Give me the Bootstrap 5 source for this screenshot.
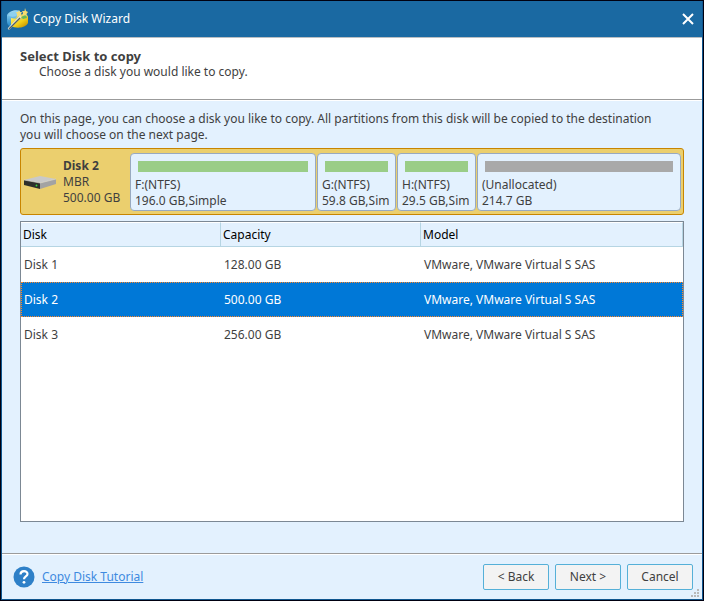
<!DOCTYPE html>
<html lang="en">
<head>
<meta charset="utf-8">
<meta name="viewport" content="width=device-width, initial-scale=1">
<title>Copy Disk Wizard</title>
<link rel="stylesheet" href="https://cdn.jsdelivr.net/npm/bootstrap@5.3.0/dist/css/bootstrap.min.css">
<style>
  body {
    font-family: "Noto Sans", "DejaVu Sans Condensed", sans-serif;
    font-size: 12px;
    line-height: 16px;
    color: #3f3f3f;
    background: #e3f1fe;
  }
  .wizard { border: 1px solid #000010; }
  .wizard-frame { border: 1px solid #0f568f; border-top: 0; }
  .titlebar { height: 36px; background: #1a69a2; color: #fff; padding: 0 8px 0 5px; gap: 4px; }
  .close-btn { width: 12px; height: 12px; }
  .page-head { height: 63px; padding: 10px 18px; background: #fff; border-top: 1px solid #b9bec2; border-bottom: 1px solid #9b9b9b; }
  .page-head p { padding-left: 19px; }
  .title-line { font-size: 13px; line-height: 16px; }
  .rule-light { border-top: 1px solid #fff; }
  .page-body { padding: 10px 18px 31px; }
  .disk-panel { min-height: 67px; margin-top: 5px; padding: 4px 2px 3px 3px; background: #ebcf6e; border: 1px solid #c88500; border-radius: 3px; }
  .disk-info { width: 106px; gap: 7px; }
  .part-list { gap: 1px; }
  .part { flex-basis: 0; height: 58px; padding: 7px 3px 0 4px; background: #e3f1fe; border: 1px solid #98a9c0; border-radius: 4px; white-space: nowrap; }
  .part-bar { height: 11px; margin: 0 4px 5px 3px; background: #9acd87; }
  .part-free { background: #a9a9a9; }
  .disk-list { margin-top: 6px; background: #fff; border: 1px solid #7c8894; }
  .disk-table { table-layout: fixed; border-collapse: separate; border-spacing: 0; }
  .disk-table th { height: 25px; padding: 0 2px; font-weight: 400; color: #000; background: #e3f1fe; border-top: 1px solid #fff; border-right: 1px solid #b6d5e3; border-bottom: 1px solid #b6d5e3; }
  .disk-table td { height: 35px; padding: 0 3px; }
  .disk-table .col-fixed { width: 200px; }
  .row-picked { background: #0078d7; color: #fff; outline: 1px dotted #ff8728; outline-offset: -1px; }
  .foot-rule { border-top: 1px solid #9b9b9b; }
  .page-foot { height: 45px; padding: 0 9px 0 11px; gap: 7px; }
  .foot-buttons { gap: 6px; }
  .tutorial { color: #3e8ae0; }
  .wiz-btn { --bs-btn-font-size: 12px; --bs-btn-line-height: 16px; --bs-btn-padding-x: 0; --bs-btn-padding-y: 4px; --bs-btn-border-radius: 2px; --bs-btn-color: #3f3f3f; --bs-btn-bg: #f3f3f3; --bs-btn-border-color: #55b0d8; --bs-btn-hover-bg: #fff; --bs-btn-hover-border-color: #2f93c4; width: 66px; }
  .grip { right: 3px; bottom: 2px; }
</style>
</head>
<body>
<div class="wizard min-vh-100 d-flex flex-column">
<div class="wizard-frame flex-grow-1 d-flex flex-column position-relative">
  <header class="titlebar d-flex align-items-center">
    <svg width="22" height="22" viewBox="0 0 22 22" aria-hidden="true">
      <defs>
        <linearGradient id="blueDisk" x1="0" y1="0" x2="0" y2="1"><stop offset="0" stop-color="#a5def5"/><stop offset="1" stop-color="#1c86cb"/></linearGradient>
        <linearGradient id="goldDisk" x1="0" y1="0" x2="1" y2="1"><stop offset="0" stop-color="#fff071"/><stop offset=".55" stop-color="#f3cf16"/><stop offset="1" stop-color="#b88300"/></linearGradient>
      </defs>
      <path d="M0 7C2 3 9 1 13 3L14 9L5 19C1 18 0 16 0 13Z" fill="url(#blueDisk)"/>
      <path d="M1 7C4 3 9 3 12 4L9 8C6 9 3 9 1 7Z" fill="#8fd0ee"/>
      <path d="M4 10C8 11 17 11 21 8L21 15C19 20 9 21 4 18Z" fill="url(#goldDisk)"/>
      <path d="M9 9C12 6 18 5 21 8C19 12 12 13 9 10Z" fill="#d3cd60"/>
      <path d="M14 9L19 7L20 10L16 11Z" fill="#67b957"/>
      <path d="M12 2L13 4L15 4L14 6L15 9L12 8L10 9L10 6L9 4L11 4Z" fill="#f3dc78"/>
      <path d="M18 0L19 3L21 4L19.500 6L20 8L17.500 7L15 8L16 5L15 3L17.500 3Z" fill="#f5dc70"/>
      <path d="M2 20.500L13 9" stroke="#dfe5df" stroke-width="2.200" stroke-linecap="round"/>
      <path d="M2 21L13 10" stroke="#55605c" stroke-width="1.200"/>
    </svg>
    <span class="flex-grow-1">Copy Disk Wizard</span>
    <button type="button" class="close-btn btn p-0 border-0 d-flex" aria-label="Close">
      <svg width="12" height="12" viewBox="0 0 12 12"><path d="M1 1L11 11M11 1L1 11" stroke="#fff" stroke-width="2"/></svg>
    </button>
  </header>

  <section class="page-head">
    <h1 class="fw-bold m-0 title-line">Select Disk to copy</h1>
    <p class="m-0">Choose a disk you would like to copy.</p>
  </section>

  <main class="page-body rule-light flex-grow-1 d-flex flex-column">
    <p class="m-0 pe-3">On this page, you can choose a disk you like to copy. All partitions from this disk will be copied to the destination you will choose on the next page.</p>

    <section class="disk-panel d-flex">
      <div class="disk-info d-flex align-items-center flex-shrink-0">
        <svg width="32" height="13" viewBox="0 0 32 13" aria-hidden="true">
          <path d="M0 4L16 0L32 3L16 7Z" fill="#c9c9c9"/>
          <path d="M0 4L16 7V13L0 9Z" fill="#2e302c"/>
          <path d="M16 7L32 3V8L16 13Z" fill="#a3a3a3"/>
          <path d="M0 4L16 7L32 3" fill="none" stroke="#dedede" stroke-width=".6"/>
          <circle cx="12.500" cy="9.500" r=".9" fill="#35e03c"/>
        </svg>
        <div class="text-nowrap"><strong>Disk 2</strong><br>MBR<br>500.00 GB</div>
      </div>
      <div class="part-list d-flex flex-grow-1">
        <div class="part" style="flex-grow:177"><div class="part-bar"></div>F:(NTFS)<br>196.0 GB,Simple</div>
        <div class="part" style="flex-grow:70"><div class="part-bar"></div>G:(NTFS)<br>59.8 GB,Sim</div>
        <div class="part" style="flex-grow:70"><div class="part-bar"></div>H:(NTFS)<br>29.5 GB,Sim</div>
        <div class="part" style="flex-grow:195"><div class="part-bar part-free"></div>(Unallocated)<br>214.7 GB</div>
      </div>
    </section>

    <div class="disk-list flex-grow-1">
      <table class="disk-table w-100">
        <thead>
          <tr><th class="col-fixed" scope="col">Disk</th><th class="col-fixed" scope="col">Capacity</th><th scope="col">Model</th></tr>
        </thead>
        <tbody>
          <tr><td>Disk 1</td><td>128.00 GB</td><td>VMware, VMware Virtual S SAS</td></tr>
          <tr class="row-picked" aria-selected="true"><td>Disk 2</td><td>500.00 GB</td><td>VMware, VMware Virtual S SAS</td></tr>
          <tr><td>Disk 3</td><td>256.00 GB</td><td>VMware, VMware Virtual S SAS</td></tr>
        </tbody>
      </table>
    </div>
  </main>

  <div class="foot-rule"></div>
  <footer class="page-foot rule-light d-flex align-items-center">
    <svg width="22" height="22" viewBox="0 0 22 22" aria-hidden="true">
      <circle cx="11" cy="11" r="10.500" fill="#2e80c8"/>
      <path d="M7.500 8.500C7.500 4 14.500 4 14.500 8C14.500 10.500 11 10.500 11 13.200" fill="none" stroke="#fff" stroke-width="2.200"/>
      <circle cx="11" cy="16.300" r="1.400" fill="#fff"/>
    </svg>
    <a class="tutorial me-auto" href="#">Copy Disk Tutorial</a>
    <div class="foot-buttons d-flex">
      <button type="button" class="btn wiz-btn">&lt; Back</button>
      <button type="button" class="btn wiz-btn">Next &gt;</button>
      <button type="button" class="btn wiz-btn">Cancel</button>
    </div>
  </footer>
  <svg class="grip position-absolute" width="8" height="8" viewBox="0 0 8 8" aria-hidden="true">
    <path d="M6 0h2v2h-2zM3 3h2v2h-2zM6 3h2v2h-2zM0 6h2v2h-2zM3 6h2v2h-2zM6 6h2v2h-2z" fill="#b9b9b9"/>
  </svg>
</div>
</div>
<script src="https://cdn.jsdelivr.net/npm/bootstrap@5.3.0/dist/js/bootstrap.bundle.min.js"></script>
</body>
</html>
